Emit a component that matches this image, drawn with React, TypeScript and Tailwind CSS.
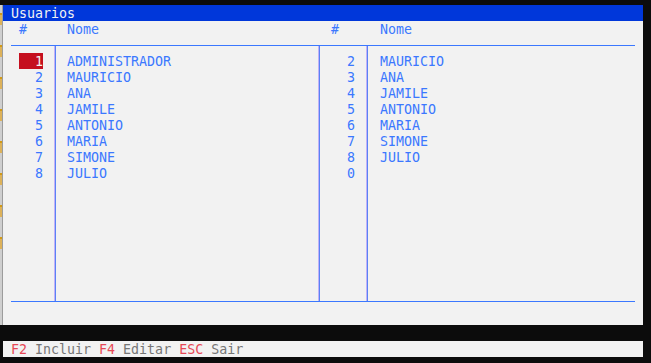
import React from "react";

const left = [
  ["1", "ADMINISTRADOR"],
  ["2", "MAURICIO"],
  ["3", "ANA"],
  ["4", "JAMILE"],
  ["5", "ANTONIO"],
  ["6", "MARIA"],
  ["7", "SIMONE"],
  ["8", "JULIO"],
];
const right = [
  ["2", "MAURICIO"],
  ["3", "ANA"],
  ["4", "JAMILE"],
  ["5", "ANTONIO"],
  ["6", "MARIA"],
  ["7", "SIMONE"],
  ["8", "JULIO"],
  ["0", ""],
];

function VLine() {
  return (
    <div className="flex w-[2px] h-full">
      <div className="w-px h-full bg-[#c2b2f6]" />
      <div className="w-px h-full bg-[#5a82f6]" />
    </div>
  );
}

export default function App() {
  const font = { fontFamily: '"DejaVu Sans Mono", "Liberation Mono", monospace' };
  return (
    <div
      className="w-[651px] h-[363px] bg-[#0c0c0c] flex flex-col overflow-hidden text-[13.3px] leading-[18px]"
      style={font}
    >
      <div className="h-[5px]" />
      <div className="flex h-[320px]">
        <div className="flex w-[3px] h-full">
          <div className="w-[2px] h-full bg-[#cfcfcf] flex flex-col gap-[20px] pt-[8px]">
            {[0, 1, 2, 3, 4, 5, 6, 7].map((i) => (
              <div key={i} className="h-[12px] w-[2px] bg-[#ddb25a] border-t-2 border-[#d29a16]" />
            ))}
          </div>
          <div className="w-px h-full bg-[#9c9c9c]" />
        </div>
        <div className="w-[640px] flex flex-col">
          <div className="h-[16px] bg-[#0037da] text-[#f2f2f2] pl-[8px]">Usuarios</div>
          <div className="flex-1 bg-[#f2f2f2] px-[8px] text-[#3b78ff]">
            <div className="grid grid-cols-[43px_2px_262px_2px_46px_2px_267px] grid-rows-[16px] h-[16px]">
              <div className="h-[16px] text-right pr-[27px]">#</div>
              <div />
              <div className="h-[16px] pl-[11px]">Nome</div>
              <div />
              <div className="h-[16px] text-right pr-[27px]">#</div>
              <div />
              <div className="h-[16px] pl-[12px]">Nome</div>
            </div>
            <div className="h-px bg-[#3b78ff] mt-[8px]" />
            <div className="grid grid-cols-[43px_2px_262px_2px_46px_2px_267px] grid-rows-[255px] h-[255px]">
              <div className="pt-[7px] pr-[11px] flex flex-col items-end">
                {left.map(([n], i) => (
                  <div
                    key={i}
                    className={
                      "w-[24px] h-[16px] shrink-0 text-right " +
                      (i === 0 ? "bg-[#c50f1f] text-[#f2f2f2]" : "")
                    }
                  >
                    {n}
                  </div>
                ))}
              </div>
              <VLine />
              <div className="pt-[7px] pl-[11px] flex flex-col">
                {left.map(([, name], i) => (
                  <div key={i} className="h-[16px] shrink-0">
                    {name}
                  </div>
                ))}
              </div>
              <VLine />
              <div className="pt-[7px] pr-[11px] flex flex-col items-end">
                {right.map(([n], i) => (
                  <div key={i} className="w-[24px] h-[16px] shrink-0 text-right">
                    {n}
                  </div>
                ))}
              </div>
              <VLine />
              <div className="pt-[7px] pl-[12px] flex flex-col">
                {right.map(([, name], i) => (
                  <div key={i} className="h-[16px] shrink-0">
                    {name}
                  </div>
                ))}
              </div>
            </div>
            <div className="h-px bg-[#3b78ff]" />
          </div>
        </div>
      </div>
      <div className="h-[16px]" />
      <div className="flex h-[16px]">
        <div className="w-[3px]" />
        <div className="w-[640px] h-[16px] bg-[#f2f2f2] pl-[8px] whitespace-pre">
          <span className="text-[#e74856]">F2</span>
          <span className="text-[#767676]"> Incluir </span>
          <span className="text-[#e74856]">F4</span>
          <span className="text-[#767676]"> Editar </span>
          <span className="text-[#e74856]">ESC</span>
          <span className="text-[#767676]"> Sair</span>
        </div>
      </div>
    </div>
  );
}
